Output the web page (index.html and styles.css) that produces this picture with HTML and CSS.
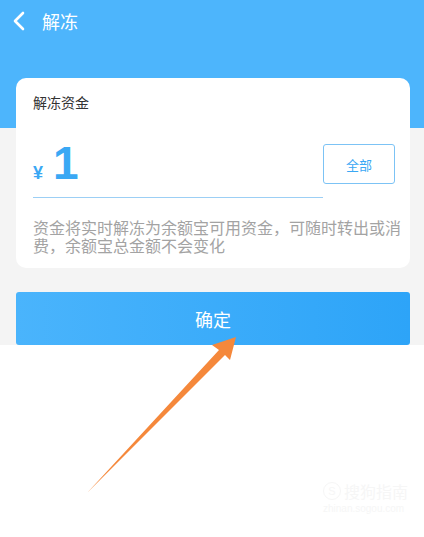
FILE: index.html
```html
<!DOCTYPE html>
<html lang="zh-CN">
<head>
    <meta charset="UTF-8">
    <meta name="viewport" content="width=device-width, initial-scale=1.0">
    <title>解冻</title>
    <link rel="stylesheet" href="styles.css">
</head>
<body>
    <div class="main">
        <div class="topbar">
            <svg class="back" width="14" height="20" viewBox="0 0 14 20">
                <polyline points="11,2 3,10 11,18" fill="none" stroke="#fff" stroke-width="2.6" stroke-linecap="round" stroke-linejoin="round"/>
            </svg>
            <span class="title">解冻</span>
        </div>

        <div class="card">
            <p class="label">解冻资金</p>
            <div class="amount-row">
                <div class="amount">
                    <span class="yen">¥</span>
                    <span class="num">1</span>
                </div>
                <button class="all-btn">全部</button>
            </div>
            <p class="desc">资金将实时解冻为余额宝可用资金，可随时转出或消费，余额宝总金额不会变化</p>
        </div>

        <button class="ok-btn">确定</button>
    </div>

    <div class="watermark">
        <div class="wm-logo"><span class="wm-s">S</span>搜狗指南</div>
        <div class="wm-url">zhinan.sogou.com</div>
    </div>

    <!-- 箭头 -->
    <svg class="arrow" width="424" height="537" viewBox="0 0 424 537">
        <polygon points="87,493 219,350 212,345 236,337 230,360 225,355" fill="#f5883b"/>
    </svg>
</body>
</html>
```

FILE: styles.css
```css
body {
    margin: 0;
    padding: 0;
    background: #fff;
    font-family: 'Noto Sans CJK SC', 'Noto Sans', sans-serif;
    position: relative;
    height: 537px;
    overflow: hidden;
}

.main {
    background: linear-gradient(to bottom, #4db5fc 0, #4db5fc 128px, #f4f4f4 128px);
    padding: 0 14px 0 16px;
}

.topbar {
    height: 42px;
    display: flex;
    align-items: center;
}

.back {
    margin-left: -4px;
    margin-right: 16px;
}

.title {
    color: #fff;
    font-size: 18px;
}

.card {
    margin-top: 36px;
    background: #fff;
    border-radius: 10px;
    padding: 14px 8px 14px 17px;
}

.label {
    margin: 0;
    font-size: 14px;
    line-height: 20px;
    color: #333;
}

.amount-row {
    display: flex;
    margin-top: 28px;
}

.amount {
    width: 290px;
    height: 57px;
    border-bottom: 1px solid #9ccff5;
    display: flex;
    align-items: baseline;
    color: #3aa8f4;
    font-family: 'Liberation Sans', Arial, sans-serif;
    font-weight: 700;
}

.yen {
    font-size: 18px;
    margin-right: 10px;
}

.num {
    font-size: 46px;
    line-height: 46px;
}

.all-btn {
    margin-top: 4px;
    width: 72px;
    height: 40px;
    background: #fff;
    border: 1px solid #7cc3f5;
    border-radius: 3px;
    color: #3aa8f4;
    font-family: 'Noto Sans CJK SC', sans-serif;
    font-size: 13px;
    padding: 0;
}

.desc {
    margin: 20px 0 0;
    font-size: 16px;
    line-height: 18px;
    color: #a3a3a3;
}

.ok-btn {
    display: block;
    width: 100%;
    height: 53px;
    margin-top: 24px;
    border: none;
    border-radius: 3px;
    background: linear-gradient(to right, #4ab4fc, #2da4f8);
    color: #fff;
    font-family: 'Noto Sans CJK SC', sans-serif;
    font-size: 18px;
    padding: 0;
}

.watermark {
    position: absolute;
    left: 323px;
    top: 481px;
    color: #f6f6f6;
}

.wm-logo {
    font-size: 16px;
    line-height: 20px;
    display: flex;
    align-items: center;
}

.wm-s {
    width: 16px;
    height: 16px;
    border: 1px solid #f6f6f6;
    border-radius: 50%;
    font-size: 11px;
    line-height: 16px;
    text-align: center;
    margin-right: 3px;
    font-family: 'Liberation Sans', sans-serif;
}

.wm-url {
    font-family: 'Liberation Sans', sans-serif;
    font-size: 10px;
    margin-top: 2px;
}

.arrow {
    position: absolute;
    left: 0;
    top: 0;
}
```
